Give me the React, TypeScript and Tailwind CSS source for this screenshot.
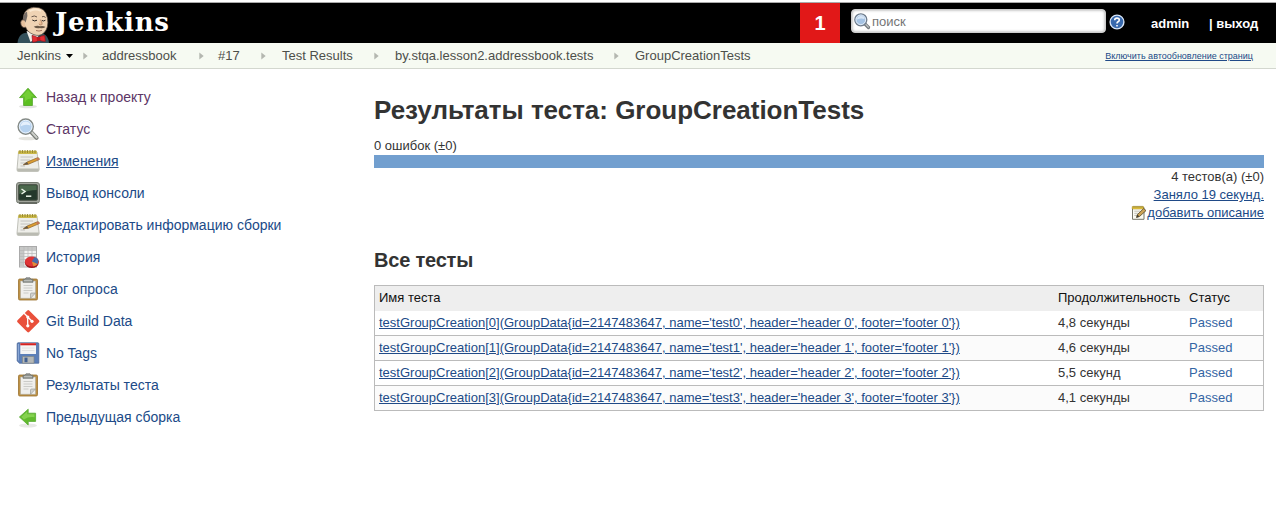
import React from 'react';

const Svg = ({ children, className = 'w-6 h-6', box = '0 0 24 24' }: { children: React.ReactNode; className?: string; box?: string }) => (
  <svg viewBox={box} className={`block shrink-0 ${className}`} aria-hidden="true">{children}</svg>
);

const Up = () => (
  <Svg>
    <ellipse cx="12" cy="21.5" rx="9" ry="1.8" fill="#e4e4e2" />
    <path d="M12 3.2 20.5 12.6H16.4V20.5H7.6V12.6H3.5Z" fill="#5cbf21" stroke="#4fa324" strokeWidth=".8" strokeLinejoin="round" />
    <path d="M12 4.8 18 11.6H15.2V14Q11 13 8.7 18V11.6H5.8Z" fill="#7cd33e" opacity=".75" />
  </Svg>
);

const Left = () => (
  <Svg>
    <ellipse cx="12" cy="20.5" rx="9" ry="2" fill="#e8e8e6" />
    <path d="M3.4 12 12.2 4.2V8.2H19.6V16.4H12.2V20Z" fill="#62bb2e" stroke="#58a932" strokeWidth=".8" strokeLinejoin="round" />
    <path d="M5.2 12 11.2 6.6V9.3H18.5V12.2Q12 11.5 8 14.5Z" fill="#92d95c" opacity=".75" />
  </Svg>
);

const Magnifier = ({ className }: { className?: string }) => (
  <Svg className={className}>
    <ellipse cx="12" cy="21.5" rx="9.5" ry="1.8" fill="#e4e4df" />
    <path d="M14.7 14.6 20.6 20.8" stroke="#777b76" strokeWidth="4" strokeLinecap="round" />
    <path d="M15.5 15 20.7 20.6" stroke="#ced0cb" strokeWidth="2" strokeLinecap="round" />
    <circle cx="9.7" cy="9.6" r="7.6" fill="#b6d2ef" stroke="#858a85" strokeWidth="1.4" />
    <circle cx="9.7" cy="9.6" r="6.3" fill="none" stroke="#e8f1fb" />
    <path d="M4.5 9.5Q5 4.5 10 4.4Q14 5 14.5 8.5Q9 6.6 4.5 9.5Z" fill="#e5f0fc" />
  </Svg>
);

const SearchGlass = () => (
  <Svg className="w-[18px] h-[18px]" box="0 0 18 18">
    <path d="M11.5 11.5 15.5 15.5" stroke="#74797d" strokeWidth="3.2" strokeLinecap="round" />
    <path d="M12.5 12.2 15.4 15.1" stroke="#c3c8ca" strokeWidth="1.2" strokeLinecap="round" />
    <circle cx="7.8" cy="7.8" r="6" fill="#a5c3e4" stroke="#6f7c8b" strokeWidth="1.3" />
    <circle cx="7.8" cy="7.8" r="4.8" fill="none" stroke="#e1ebf6" />
    <path d="M4 7.6Q4.2 4 8 4T11.4 7Q7.5 5.7 4 7.6Z" fill="#d7e6f6" />
  </Svg>
);

const Notepad = () => (
  <Svg>
    <path d="M2.5 3H21L23.2 20.5Q23 22.3 21.5 22.3H2.5Q.8 22.3 1 20.4Z" fill="#eeeee9" stroke="#b1b2aa" strokeWidth=".8" />
    <path d="M1 19.5H23L22.5 22.5H1.5Z" fill="#babbb2" />
    <path d="M2.4 1.8H20.8V5H2.2Z" fill="#cbb94a" />
    <path d="M4 1V4M6.5 1V4M9 1V4M11.5 1V4M14 1V4M16.5 1V4M19 1V4" stroke="#94872f" strokeWidth=".9" />
    <path d="M4.5 8H17M4.5 11H14M4.5 14H11M4.5 17H9" stroke="#b7b8b5" strokeWidth=".8" />
    <path d="M7.3 15.8 11 13.1 21.3 8.8Q23.6 8.4 23.3 10.6L12.5 15.2Z" fill="#dc9e32" stroke="#8a6229" strokeWidth=".7" />
    <path d="M7.3 15.8 11 13.1 12.5 15.2Z" fill="#62584b" />
    <path d="m19.8 9.4 1.7-.7q2.1-.1 1.8 1.9l-1.8.8Z" fill="#c47457" />
  </Svg>
);

const EditNote = () => (
  <Svg className="w-4 h-4" box="0 0 16 16">
    <path d="M1.5 2.5H13V14.3H1.5Z" fill="#fbfbf4" stroke="#77776b" />
    <path d="M1.2 1.5H12.5V4H1.2Z" fill="#ebcb43" stroke="#a68a25" strokeWidth=".5" />
    <path d="M3 .8V3M5 .8V3M7 .8V3M9 .8V3M11 .8V3" stroke="#80702d" strokeWidth=".7" />
    <path d="M3.3 6.2H9.3M3.3 8.3H7.5M3.3 10.4H6" stroke="#b1b1a9" strokeWidth=".8" />
    <path d="M5.5 12.5 6.4 9.6 12.7 3.5 15 5.6 8.4 11.6Z" fill="#cda457" stroke="#544525" strokeWidth=".8" />
    <path d="M5.5 12.5 6.4 9.6 8.4 11.6Z" fill="#403b30" />
  </Svg>
);

const Terminal = () => (
  <Svg>
    <rect x=".5" y="1.5" width="23" height="20.5" rx="2.5" fill="#a0a49b" stroke="#777c73" />
    <path d="M3 22H21" stroke="#656a62" strokeWidth="2" />
    <rect x="2.7" y="3.7" width="18.6" height="15.5" rx="1" fill="#24382b" stroke="#454d42" />
    <path d="M3.3 4.3H20.7V9Q12 9 3.3 13Z" fill="#4b684c" />
    <path d="M5.5 8 9 10.5 5.5 13" fill="none" stroke="#eef5e9" strokeWidth="1.5" />
    <path d="M10 15.2H15.3" stroke="#eef5e9" strokeWidth="1.5" />
  </Svg>
);

const History = () => (
  <Svg>
    <rect x="3.5" y="1.5" width="17" height="20.5" fill="#f2f2f1" stroke="#aaa" />
    <path d="M4 2H20V5H4ZM4 5H8V21.5H4Z" fill="#c7c8c7" />
    <path d="M4 5.5H20M4 8.5H20M4 11.5H20M4 14.5H20M4 17.5H20M8 2V22M12 2V22M16 2V22" stroke="#b7b7b7" strokeWidth=".7" />
    <ellipse cx="15.8" cy="17.7" rx="6.9" ry="5.3" fill="#9c151b" />
    <ellipse cx="15.8" cy="16.5" rx="6.9" ry="5" fill="#df3436" />
    <path d="M15.8 16.5 18.6 12Q22.2 13.2 22.5 16L21.5 19.2Z" fill="#496ca9" />
    <path d="M15.8 16.5 21.5 19.1Q20 21.1 17.5 21.5Z" fill="#e18d39" />
  </Svg>
);

const Clipboard = () => (
  <Svg>
    <rect x="2.5" y="2" width="19" height="21" rx="1.3" fill="#bd9145" stroke="#9a712e" strokeWidth=".8" />
    <path d="M4.5 4H19.5V21.3H4.5Z" fill="#efefed" stroke="#a5a59d" strokeWidth=".5" />
    <path d="M7.5 8.5H16.5M7.5 11H16.5M7.5 13.5H16.5M7.5 16H12.5" stroke="#c2c3bf" strokeWidth=".8" />
    <path d="M19.5 16 14.5 21.3V17Q14.5 16 15.5 16Z" fill="#d0d1ce" stroke="#92938e" strokeWidth=".6" />
    <path d="M7 2.3H9L10 .8H14L15 2.3H17V5.3H7Z" fill="#8f938f" stroke="#6e716e" strokeWidth=".7" />
    <path d="M8 3.7H16" stroke="#c3c6c3" />
  </Svg>
);

const Git = () => (
  <Svg>
    <rect x="4" y="4" width="16.5" height="16.5" rx="1.3" transform="rotate(45 12.25 12.25)" fill="#e9503b" />
    <path d="M8.1 4.3 11.7 7.8V17M11.7 8 16 12.3" fill="none" stroke="#fff" strokeWidth="1.3" />
    <circle cx="11.8" cy="8" r="1.6" fill="#fff" />
    <circle cx="16" cy="12.3" r="1.6" fill="#fff" />
    <circle cx="11.8" cy="16.8" r="1.6" fill="#fff" />
  </Svg>
);

const Floppy = () => (
  <Svg>
    <path d="M2 1.8H22Q22.8 1.8 22.8 3V22.2H3.5L1.2 20V3Q1.2 1.8 2 1.8Z" fill="#5c7fb8" stroke="#4b6899" strokeWidth=".8" />
    <path d="M2.5 3V19.5" stroke="#89a7d5" />
    <path d="M4.3 2.2H20V13H4.3Z" fill="#f5f5f5" />
    <path d="M4.3 2.2H20V4.3H4.3Z" fill="#d52323" />
    <path d="M6 7H18.5M6 9.5H18.5" stroke="#ddd" strokeWidth=".8" />
    <path d="M6.5 15.5H18V22.2H6.5Z" fill="#b5b8b7" stroke="#818685" strokeWidth=".7" />
    <path d="M8.5 16.6H11.5V21.2H8.5Z" fill="#405f90" />
  </Svg>
);

const Butler = () => (
  <Svg className="w-8 h-[37px]" box="0 0 32 37">
    <path d="M.5 37Q1 30 6 27.5L12 26 26 27.5Q31.5 30 32 37Z" fill="#33505b" />
    <path d="M9.5 25 13.5 36 20 31.5 23 28Z" fill="#f1efea" />
    <path d="M6.2 14Q5.7 3 16.5 1.3Q28.5.5 30.5 12Q32 22 27 26.8Q22.5 31.2 16 28.3Q10 25.8 8.6 21L5 20Q4 17 6.2 14Z" fill="#efd3b4" stroke="#4d433c" strokeWidth=".7" />
    <path d="M6 14Q6 8.5 10 5.6Q11 9.5 9.4 14L8.4 16.6Z" fill="#746b65" />
    <path d="M7.7 14.3Q4 12.6 3.7 16.6Q3.9 22 8.4 21.5" fill="#e6c19e" stroke="#594a42" strokeWidth=".8" />
    <path d="M12.5 5.2Q17.5 1.8 24 4.8" fill="none" stroke="#fbe9d2" strokeWidth="2" />
    <path d="M14.5 10.8Q17.5 9 20 11M25 10.8Q27 9.7 28.6 11.5" fill="none" stroke="#6a5a4e" strokeWidth="1" />
    <path d="M15.3 14Q17.5 15.8 20 14.2M24.8 14.4Q26.5 15.7 28.4 14.2" fill="none" stroke="#2b2724" strokeWidth="1" />
    <path d="M23.3 13.5Q26.3 18 24.3 19Q22.6 19.2 21.8 17.8" fill="#e9bd96" stroke="#a77a5d" strokeWidth=".8" />
    <path d="M16.7 20.7Q20.5 19 23 20.3Q26 19.4 28.6 21Q26 22.8 23 22.1Q19.5 23 16.7 20.7Z" fill="#695847" />
    <path d="M19 24.5Q22 25.7 25 24.3" fill="none" stroke="#9d6652" strokeWidth=".9" />
    <path d="M15 29.4Q18 29.5 21.2 32Q24.5 29.2 27.8 29.6L28.3 35.4Q25 35.5 21.8 34Q19.5 36.3 15.7 36.3Z" fill="#e42b32" stroke="#8c151b" strokeWidth=".7" />
    <ellipse cx="21.6" cy="32.9" rx="1.9" ry="2.2" fill="#bd1720" />
  </Svg>
);

const Arrow = ({ className }: { className: string }) => (
  <Svg className={`w-[5px] h-2 ${className}`} box="0 0 5 8"><path d="M.3.5 4.7 4 .3 7.5Z" fill="#b4b7b0" /></Svg>
);

const side = [
  { icon: Up, label: 'Назад к проекту', style: 'text-[#5c3566]' },
  { icon: Magnifier, label: 'Статус', style: 'text-[#5c3566]' },
  { icon: Notepad, label: 'Изменения', style: 'text-[#204a87] underline' },
  { icon: Terminal, label: 'Вывод консоли', style: 'text-[#204a87]' },
  { icon: Notepad, label: 'Редактировать информацию сборки', style: 'text-[#204a87]' },
  { icon: History, label: 'История', style: 'text-[#204a87]' },
  { icon: Clipboard, label: 'Лог опроса', style: 'text-[#204a87]' },
  { icon: Git, label: 'Git Build Data', style: 'text-[#204a87]' },
  { icon: Floppy, label: 'No Tags', style: 'text-[#204a87]' },
  { icon: Clipboard, label: 'Результаты теста', style: 'text-[#204a87]' },
  { icon: Left, label: 'Предыдущая сборка', style: 'text-[#204a87]' },
];

const durations = ['4,8 секунды', '4,6 секунды', '5,5 секунд', '4,1 секунды'];

export default function App() {
  return (
    <div className="h-[530px] w-[1276px] overflow-hidden bg-white font-['Liberation_Sans',Arial,sans-serif] text-[13px] leading-[18px] text-[#333] whitespace-nowrap">
      <div className="h-[3px] border-b border-[#aaa]" />
      <header className="flex h-10 bg-black text-white">
        <a className="flex w-[800px] pl-[17px] pt-[3px]" href="#">
          <Butler />
          <span className="ml-1.5 font-['DejaVu_Serif',serif] text-[26px] leading-[32px] font-bold tracking-[0.8px]">Jenkins</span>
        </a>
        <div className="flex w-10 items-center justify-center bg-[#e11818] text-[20px] font-bold">1</div>
        <div className="ml-[11px] mt-[6px] flex h-6 w-[255px] items-center rounded-[4px] border border-[#ccc] bg-white pl-px shadow-[inset_0_0_3px_#999]">
          <SearchGlass />
          <span className="ml-px mt-0.5 text-[13px] text-[#757575]">поиск</span>
        </div>
        <Svg className="ml-[3px] mt-[11px] w-4 h-4" box="0 0 16 16">
          <circle cx="8" cy="8" r="6.9" fill="#3869ad" stroke="#d9e6f7" strokeWidth="1.4" />
          <path d="M5.7 6.2Q5.7 4.1 8 4.1T10.3 6Q10.3 7.1 9 7.8Q8 8.4 8 9.5M8 10.9V12.5" fill="none" stroke="#fff" strokeWidth="1.6" />
        </Svg>
        <span className="ml-[26px] mt-3 w-[58px] text-[13px] font-bold">admin</span>
        <span className="mt-3 text-[13px] font-bold">| выход</span>
      </header>
      <nav className="flex h-[26px] items-center border-b border-[#d3d7cf] bg-[#f6faf2] text-[#4d4f4a]">
        <span className="ml-[17px] w-[49px]">Jenkins</span>
        <Svg className="w-[7px] h-1" box="0 0 7 4"><path d="M0 0H7L3.5 4Z" fill="#000" /></Svg>
        <Arrow className="ml-[10px]" /><span className="ml-[14px] w-[97px]">addressbook</span>
        <Arrow className="" /><span className="ml-[14px] w-[43px]">#17</span>
        <Arrow className="" /><span className="ml-[16px] w-[92px]">Test Results</span>
        <Arrow className="" /><span className="ml-[16px] w-[219px]">by.stqa.lesson2.addressbook.tests</span>
        <Arrow className="" /><span className="ml-[16px]">GroupCreationTests</span>
        <a className="ml-auto mr-[23px] text-[9px] text-[#204a87] underline" href="#">Включить автообновление страниц</a>
      </nav>
      <div className="flex">
        <aside className="w-[374px] pl-4 pt-3">
          {side.map(({ icon: Icon, label, style }) => (
            <a key={label} href="#" className={`flex h-8 items-center gap-1.5 text-[14px] ${style}`}><Icon /><span>{label}</span></a>
          ))}
        </aside>
        <main className="w-[890px] pt-[26px]">
          <h1 className="text-[26px] leading-[30px] font-bold tracking-[-0.02px]">Результаты теста: GroupCreationTests</h1>
          <div className="mt-[12px] h-[18px]">0 ошибок (±0)</div>
          <div className="h-[13px] bg-[#729fcf]" />
          <div className="text-right">
            <div>4 тестов(а) (±0)</div>
            <a className="block text-[#204a87] underline" href="#">Заняло 19 секунд.</a>
            <a className="flex items-center justify-end text-[#204a87] underline" href="#"><EditNote />добавить описание</a>
          </div>
          <h2 className="mt-[26px] text-[20px] leading-6 font-bold tracking-[-0.2px]">Все тесты</h2>
          <table className="mt-[13px] w-full border-collapse table-fixed border border-[#bbb] text-left">
            <colgroup><col className="w-[679.5px]" /><col className="w-[131px]" /><col /></colgroup>
            <thead><tr className="h-[25px] bg-[#eee] text-[#111]"><th className="px-1 font-normal">Имя теста</th><th className="px-1 font-normal">Продолжительность</th><th className="px-1 font-normal">Статус</th></tr></thead>
            <tbody>{durations.map((duration, i) => (
              <tr key={i} className="h-[25px] border-b border-[#bbb] even:bg-[#fbfbfb]">
                <td className="px-1"><a className="text-[#204a87] underline" href="#">{`testGroupCreation[${i}](GroupData{id=2147483647, name='test${i}', header='header ${i}', footer='footer ${i}'})`}</a></td>
                <td className="px-1">{duration}</td><td className="px-1 text-[#3465a4]">Passed</td>
              </tr>
            ))}</tbody>
          </table>
        </main>
      </div>
    </div>
  );
}
